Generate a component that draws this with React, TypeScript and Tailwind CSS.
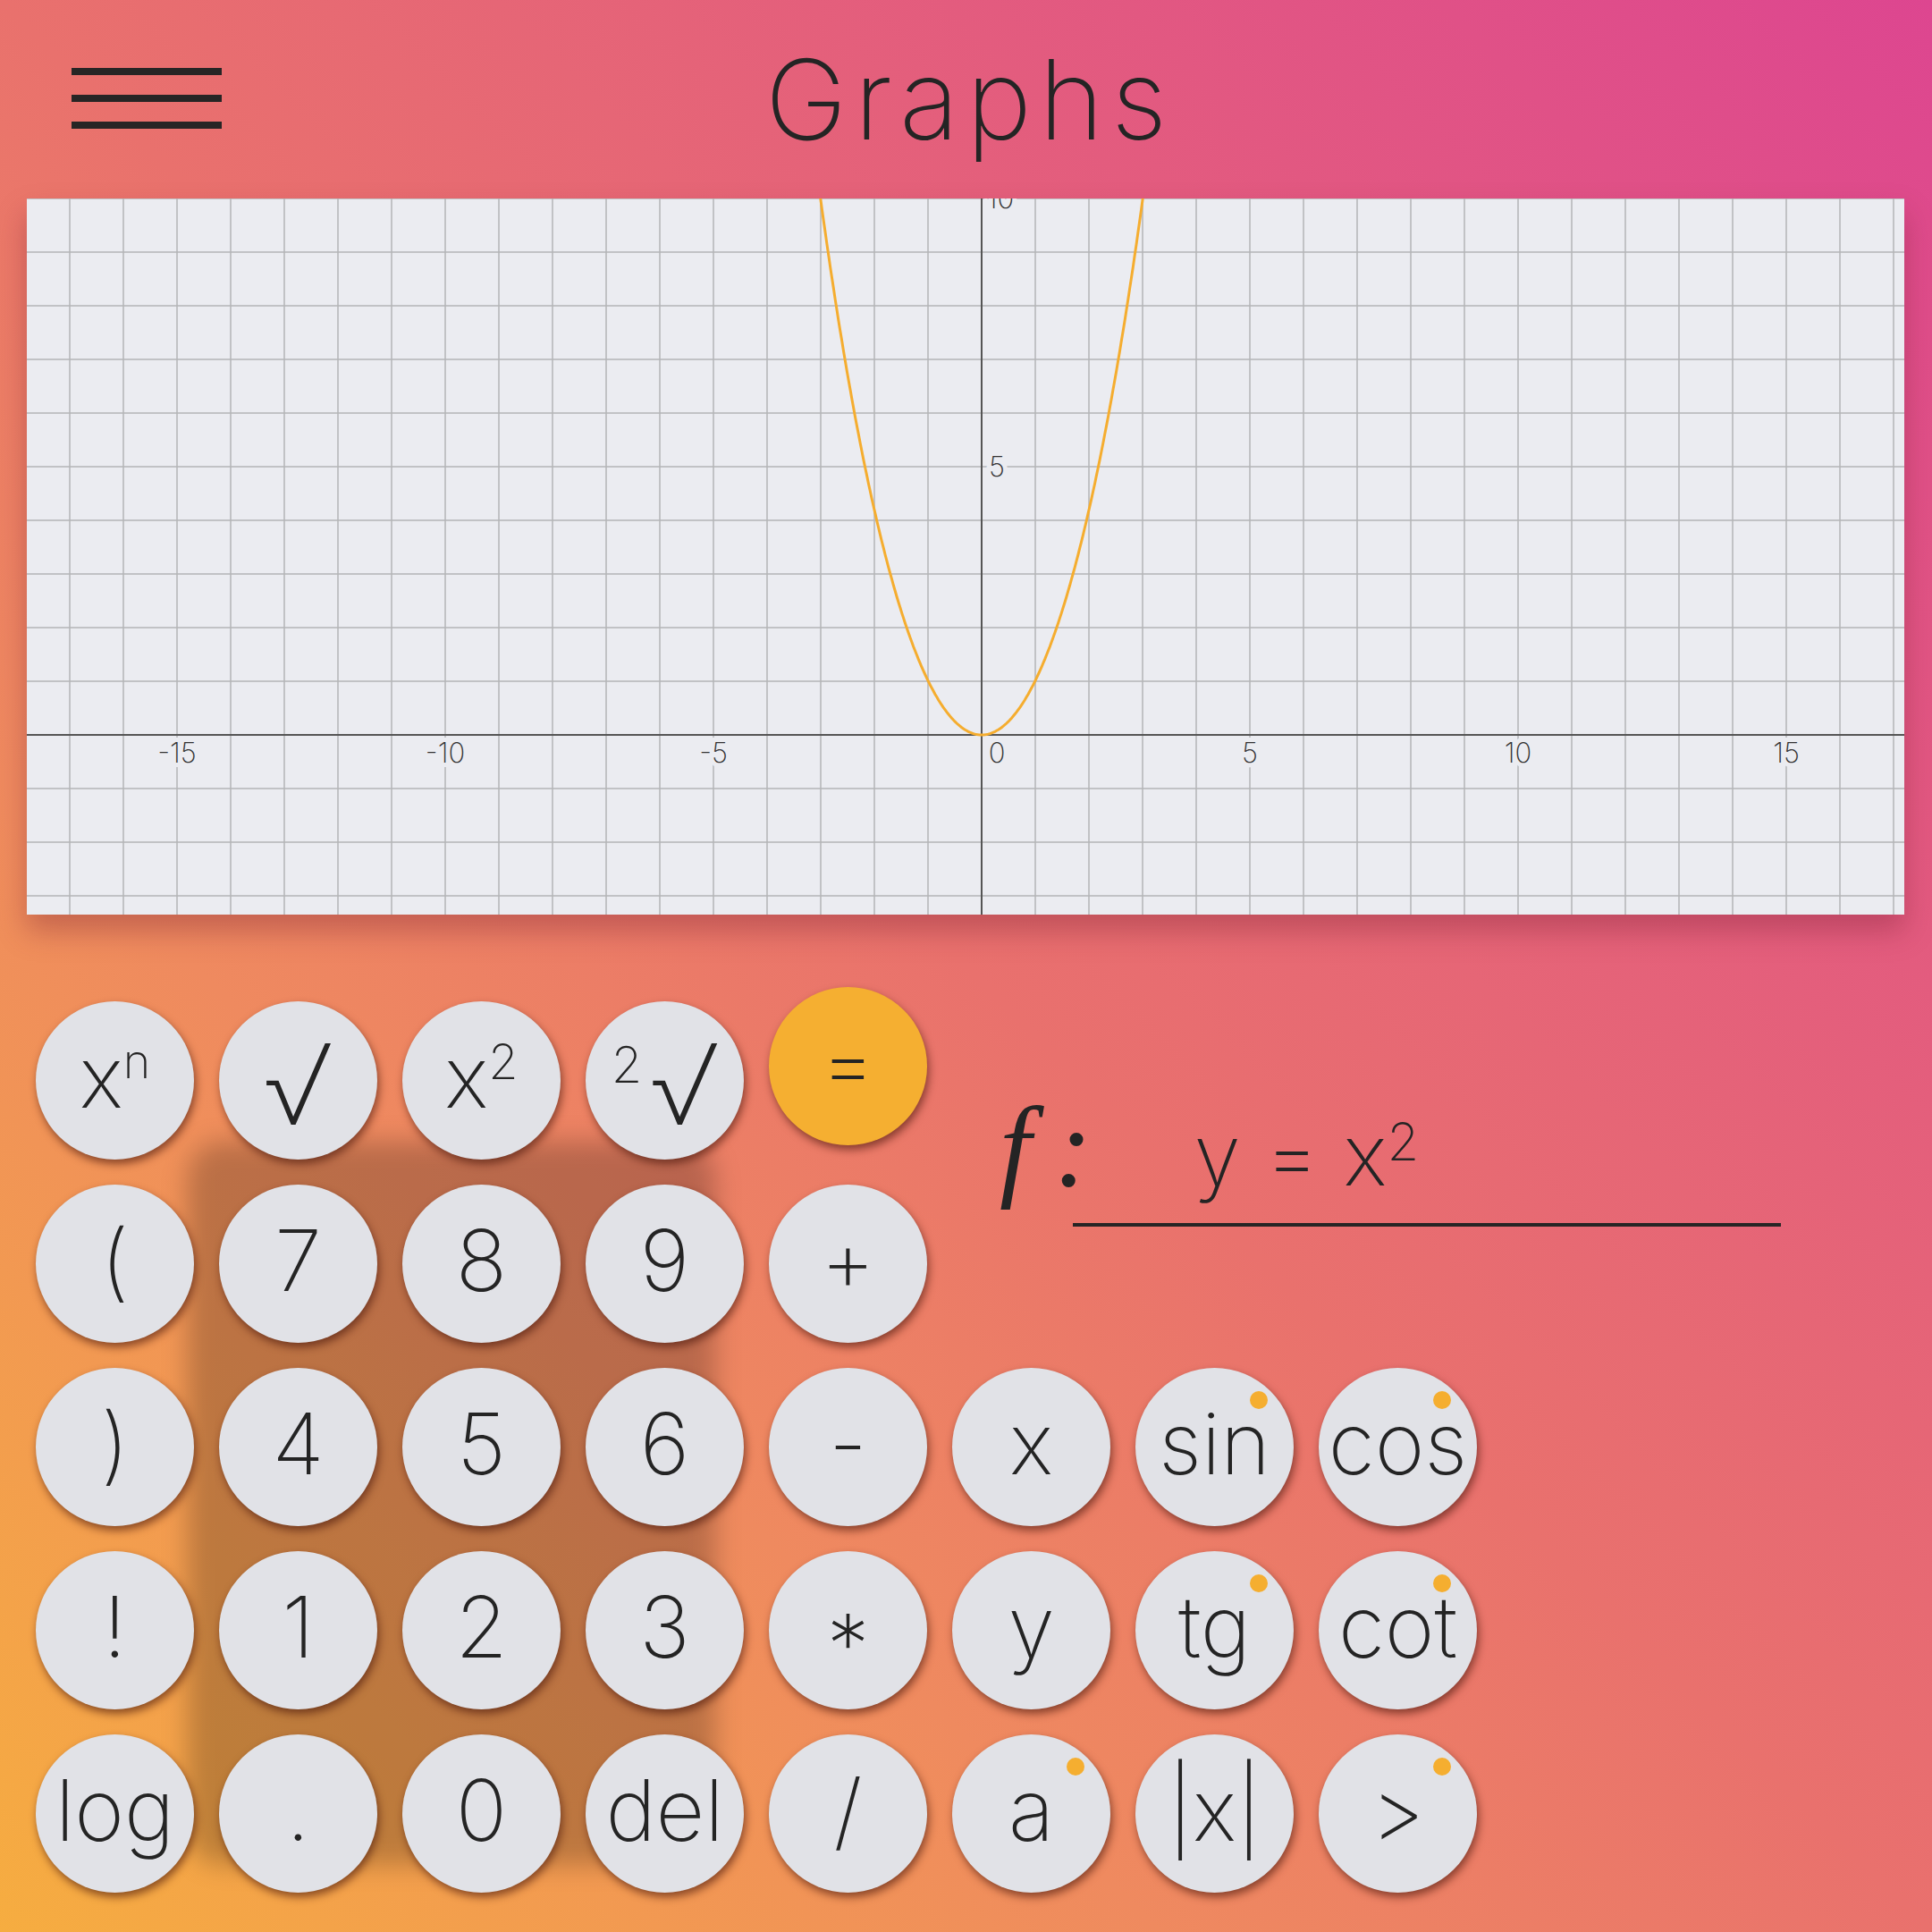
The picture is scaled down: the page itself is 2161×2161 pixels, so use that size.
import React from 'react';

type Key = { label: React.ReactNode; accent?: boolean; dot?: boolean; raised?: boolean };

const sup = (t: string, cls: string) => <span className={`leading-none ${cls}`}>{t}</span>;

const root = (small?: string) => (
  <span className="inline-block text-[125px] leading-none translate-y-[8px]">
    {small && sup(small, 'text-[56px] align-[47px] mr-[10px]')}√
  </span>
);

const keys: Key[] = [
  { label: <>x{sup('n', 'text-[52px] align-[33px]')}</> },
  { label: root() },
  { label: <>x{sup('2', 'text-[54px] align-[32px]')}</> },
  { label: root('2') },
  { label: '=', accent: true, raised: true },
  { label: '(' },
  { label: '7' },
  { label: '8' },
  { label: '9' },
  { label: '+' },
  { label: ')' },
  { label: '4' },
  { label: '5' },
  { label: '6' },
  { label: '-' },
  { label: 'x' },
  { label: 'sin', dot: true },
  { label: 'cos', dot: true },
  { label: '!' },
  { label: '1' },
  { label: '2' },
  { label: '3' },
  { label: <span className="inline-block translate-y-[20px]">*</span> },
  { label: 'y' },
  { label: 'tg', dot: true },
  { label: 'cot', dot: true },
  { label: 'log' },
  { label: '.' },
  { label: '0' },
  { label: 'del' },
  { label: '/' },
  { label: 'a', dot: true },
  { label: '|x|' },
  { label: '>', dot: true },
];

// graph geometry (panel-local px)
const OX = 1068;
const OY = 600;
const U = 60;

function curvePath() {
  const pts: string[] = [];
  for (let i = 0; i <= 200; i++) {
    const x = -3.1 + (6.2 * i) / 200;
    const y = x * x + 0.012 * x * x * x * x;
    pts.push(`${(OX + x * U).toFixed(1)},${(OY - y * U).toFixed(1)}`);
  }
  return 'M' + pts.join(' L');
}

function Graph() {
  const vx = Array.from({ length: 35 }, (_, i) => OX + (i - 17) * U);
  const hy = Array.from({ length: 14 }, (_, i) => OY - (i - 3) * U);
  const xLabels = [-15, -10, -5, 5, 10, 15];
  const lbl = {
    fontFamily: 'Inter, "Liberation Sans", sans-serif',
    fontWeight: 200,
    fontSize: 31,
    fill: '#333',
    stroke: '#ebecf1',
    strokeWidth: 10,
    paintOrder: 'stroke' as const,
  };
  return (
    <svg width="2100" height="801" viewBox="0 0 2100 801" className="block">
      {vx.map((x) => (
        <line key={'v' + x} x1={x} y1={0} x2={x} y2={801} stroke="#b3b4b6" strokeWidth="1.5" />
      ))}
      {hy.map((y) => (
        <line key={'h' + y} x1={0} y1={y} x2={2100} y2={y} stroke="#b3b4b6" strokeWidth="1.5" />
      ))}
      <line x1={0} y1={OY} x2={2100} y2={OY} stroke="#555" strokeWidth="2" />
      <line x1={OX} y1={0} x2={OX} y2={801} stroke="#555" strokeWidth="2" />
      {xLabels.map((v) => (
        <text key={v} x={OX + v * U} y={631} textAnchor="middle" style={lbl}>
          {v}
        </text>
      ))}
      <text x={OX + 17} y={631} textAnchor="middle" style={lbl}>0</text>
      <text x={OX + 17} y={311} textAnchor="middle" style={lbl}>5</text>
      <text x={OX + 21} y={11} textAnchor="middle" style={lbl}>10</text>
      <path d={curvePath()} fill="none" stroke="#f5ad2f" strokeWidth="3" />
    </svg>
  );
}

export default function App() {
  return (
    <div
      className="w-[2161px] h-[2161px] overflow-hidden text-[#242424] bg-[linear-gradient(to_top_right,#f6ad40_0%,#ef8a5f_30%,#e9716d_50%,#dd4690_100%)]"
      style={{ fontFamily: 'Inter, "Liberation Sans", sans-serif' }}
    >
      {/* Header */}
      <div className="grid grid-cols-[1fr_auto_1fr] h-[222px]">
        <div className="pl-[80px] pt-[76px] flex flex-col gap-[22px]">
          <div className="w-[168px] h-[8px] bg-[#272525]" />
          <div className="w-[168px] h-[8px] bg-[#272525]" />
          <div className="w-[168px] h-[8px] bg-[#272525]" />
        </div>
        <div className="pt-[49px] pl-[8px] text-[124px] leading-none font-extralight tracking-[8px]">Graphs</div>
        <div />
      </div>

      {/* Graph */}
      <div className="ml-[30px] w-[2100px] h-[801px] bg-[#ebecf1] overflow-hidden shadow-[0_18px_30px_rgba(120,30,50,0.35)]">
        <Graph />
      </div>

      {/* Keypad */}
      <div className="relative mt-[97px] ml-[40px] grid grid-cols-[repeat(8,177px)] auto-rows-[177px] gap-[28px]">
        <div className="absolute left-[170px] top-[157px] w-[590px] h-[809px] rounded-[40px] bg-black/[0.22] blur-[14px]" />

        <div className="col-start-6 col-span-3 row-start-1 row-span-2 pl-[53px] pt-[100px]">
          <div className="flex items-baseline whitespace-nowrap">
            <span className="text-[127px] leading-none italic" style={{ fontFamily: '"Liberation Serif", serif' }}>
              f<span className="ml-[26px]">:</span>
            </span>
            <span className="ml-[114px] text-[95px] leading-none font-extralight">
              y = x<span className="text-[58px] leading-none align-[28px]">2</span>
            </span>
          </div>
          <div className="mt-[21px] ml-[82px] w-[792px] h-[4px] bg-[#272525]" />
        </div>

        {keys.map((k, i) => (
          <div
            key={i}
            className={`relative w-[177px] h-[177px] rounded-full flex items-center justify-center pb-[9px] text-[95px] leading-none font-extralight whitespace-nowrap shadow-[2px_5px_10px_rgba(70,20,10,0.6)] ${
              k.accent ? 'bg-[#f5af31]' : 'bg-[#e1e2e7]'
            } ${k.raised ? '-mt-[16px]' : ''}`}
          >
            <span>{k.label}</span>
            {k.dot && <span className="absolute left-[128px] top-[26px] w-[20px] h-[20px] rounded-full bg-[#f5ae30]" />}
          </div>
        ))}
      </div>
    </div>
  );
}
